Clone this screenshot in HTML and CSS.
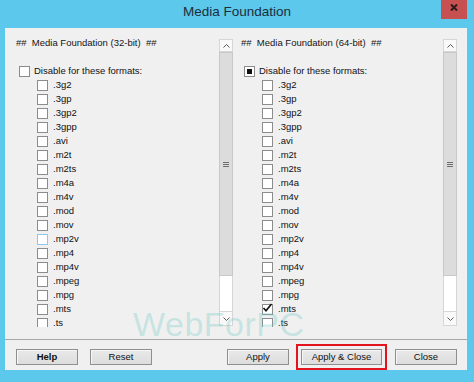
FILE: index.html
```html
<!DOCTYPE html>
<html>
<head>
<meta charset="utf-8">
<link rel="stylesheet" href="styles.css">
</head>
<body>
<div class="window">
  <div class="titlebar">
    <span class="title">Media Foundation</span>
    <div class="close"><svg width="8" height="7" viewBox="0 0 8 7"><path d="M1 0.5 L7 6.5 M7 0.5 L1 6.5" stroke="#2a1c1c" stroke-width="2"/></svg></div>
  </div>
  <div class="client">
    <div class="panels">
      <div class="panel left">
        <div class="list">
          <div class="hdr">##  Media Foundation (32-bit)  ##</div>
          <div class="row master"><span class="cb"></span><span>Disable for these formats:</span></div>
          <ul class="formats">
            <li><span class="cb"></span>.3g2</li>
            <li><span class="cb"></span>.3gp</li>
            <li><span class="cb"></span>.3gp2</li>
            <li><span class="cb"></span>.3gpp</li>
            <li><span class="cb"></span>.avi</li>
            <li><span class="cb"></span>.m2t</li>
            <li><span class="cb"></span>.m2ts</li>
            <li><span class="cb"></span>.m4a</li>
            <li><span class="cb"></span>.m4v</li>
            <li><span class="cb"></span>.mod</li>
            <li><span class="cb"></span>.mov</li>
            <li><span class="cb hover"></span>.mp2v</li>
            <li><span class="cb"></span>.mp4</li>
            <li><span class="cb"></span>.mp4v</li>
            <li><span class="cb"></span>.mpeg</li>
            <li><span class="cb"></span>.mpg</li>
            <li><span class="cb"></span>.mts</li>
            <li><span class="cb"></span>.ts</li>
          </ul>
        </div>
        <div class="scrollbar">
          <div class="sb-btn up"><svg width="7" height="4" viewBox="0 0 7 4"><path d="M0.5 3.5 L3.5 0.5 L6.5 3.5" fill="none" stroke="#5a5a5a" stroke-width="1"/></svg></div>
          <div class="thumb"><span class="grip"></span></div>
          <div class="track"></div>
          <div class="sb-btn down"><svg width="7" height="4" viewBox="0 0 7 4"><path d="M0.5 0.5 L3.5 3.5 L6.5 0.5" fill="none" stroke="#5a5a5a" stroke-width="1"/></svg></div>
        </div>
      </div>
      <div class="panel right">
        <div class="list">
          <div class="hdr">##  Media Foundation (64-bit)  ##</div>
          <div class="row master"><span class="cb mixed"></span><span>Disable for these formats:</span></div>
          <ul class="formats">
            <li><span class="cb"></span>.3g2</li>
            <li><span class="cb"></span>.3gp</li>
            <li><span class="cb"></span>.3gp2</li>
            <li><span class="cb"></span>.3gpp</li>
            <li><span class="cb"></span>.avi</li>
            <li><span class="cb"></span>.m2t</li>
            <li><span class="cb"></span>.m2ts</li>
            <li><span class="cb"></span>.m4a</li>
            <li><span class="cb"></span>.m4v</li>
            <li><span class="cb"></span>.mod</li>
            <li><span class="cb"></span>.mov</li>
            <li><span class="cb"></span>.mp2v</li>
            <li><span class="cb"></span>.mp4</li>
            <li><span class="cb"></span>.mp4v</li>
            <li><span class="cb"></span>.mpeg</li>
            <li><span class="cb"></span>.mpg</li>
            <li><span class="cb checked"><svg width="11" height="10" viewBox="0 0 11 10"><path d="M1.5 5 L4 7.8 L9.5 1" fill="none" stroke="#111" stroke-width="1.7"/></svg></span>.mts</li>
            <li><span class="cb"></span>.ts</li>
          </ul>
        </div>
        <div class="scrollbar">
          <div class="sb-btn up"><svg width="7" height="4" viewBox="0 0 7 4"><path d="M0.5 3.5 L3.5 0.5 L6.5 3.5" fill="none" stroke="#5a5a5a" stroke-width="1"/></svg></div>
          <div class="thumb"><span class="grip"></span></div>
          <div class="track"></div>
          <div class="sb-btn down"><svg width="7" height="4" viewBox="0 0 7 4"><path d="M0.5 0.5 L3.5 3.5 L6.5 0.5" fill="none" stroke="#5a5a5a" stroke-width="1"/></svg></div>
        </div>
      </div>
    </div>
    <div class="footer">
      <button class="btn bold">Help</button>
      <button class="btn">Reset</button>
      <span class="spacer"></span>
      <button class="btn">Apply</button>
      <button class="btn wide marked">Apply &amp; Close</button>
      <button class="btn">Close</button>
    </div>
    <div class="watermark">WebForPC</div>
  </div>
</div>
</body>
</html>
```
FILE: styles.css
```css
html, body {
  margin: 0;
  padding: 0;
}
body {
  width: 474px;
  height: 382px;
  overflow: hidden;
  background: #5bc8ec;
  font-family: "Liberation Sans", Arial, sans-serif;
  color: #111;
}
.window {
  display: flex;
  flex-direction: column;
  height: 382px;
}
.titlebar {
  position: relative;
  height: 28px;
  display: flex;
  justify-content: center;
  align-items: flex-start;
}
.title {
  margin-top: 5px;
  font-size: 13.5px;
  line-height: 14px;
  color: #1d2e3b;
}
.close {
  position: absolute;
  top: 0;
  right: 7px;
  width: 26px;
  height: 19px;
  background: #c75050;
  display: flex;
  justify-content: center;
  align-items: flex-start;
  padding-top: 4px;
  box-sizing: border-box;
}
.close svg { display: block; }
.client {
  position: relative;
  margin: 0 7px 12px 5px;
  height: 342px;
  background: #f0f0f0;
  display: flex;
  flex-direction: column;
}
.panels {
  display: flex;
  gap: 1px;
  padding: 9px 0 0 6px;
  height: 290px;
  margin-bottom: 12px;
}
.panel {
  display: flex;
  height: 290px;
}
.panel.left { width: 224px; }
.panel.right { width: 222px; }
.panel.left .scrollbar { margin-right: 2px; }
.panel.right .scrollbar { margin-right: 1px; }
.list {
  flex: 1;
  overflow: hidden;
  padding-left: 5px;
  font-size: 9.5px;
}
.hdr {
  line-height: 12px;
  height: 12px;
  white-space: pre;
  color: #151515;
}
.row, .formats li {
  display: flex;
  align-items: center;
  height: 14px;
  line-height: 14px;
  white-space: nowrap;
}
.row.master {
  margin-top: 15px;
  padding-left: 3px;
  gap: 4px;
}
.formats {
  list-style: none;
  margin: 0;
  padding: 0 0 0 21px;
}
.formats li { gap: 5px; }
.cb {
  position: relative;
  flex: none;
  width: 9px;
  height: 9px;
  border: 1px solid #8c8c8c;
  background: #fff;
}
.cb.hover { border-color: #8cc8ee; }
.cb.mixed::after {
  content: "";
  position: absolute;
  left: 2px;
  top: 2px;
  width: 5px;
  height: 5px;
  background: #111;
}
.cb.checked svg {
  position: absolute;
  left: -1px;
  top: -2px;
}
.scrollbar {
  flex: none;
  margin-top: 2px;
  width: 14px;
  height: 287px;
  box-sizing: border-box;
  border: 1px solid #d6d6d6;
  background: #fdfdfd;
  display: flex;
  flex-direction: column;
}
.sb-btn {
  flex: none;
  display: flex;
  justify-content: center;
  align-items: center;
  background: #f9f9f9;
}
.sb-btn svg { display: block; }
.sb-btn.up { height: 11px; border-bottom: 1px solid #d6d6d6; }
.sb-btn.down { height: 13px; border-top: 1px solid #d6d6d6; }
.thumb {
  flex: none;
  height: 224px;
  box-sizing: border-box;
  background: #dcdcdc;
  border: 1px solid #c8c8c8;
  margin: 0 -1px;
  display: flex;
  justify-content: center;
  align-items: center;
}
.grip {
  width: 6px;
  height: 5px;
  background: repeating-linear-gradient(#6e6e6e 0 1px, transparent 1px 2px);
}
.track {
  flex: 1;
  background: #fff;
}
.footer {
  display: flex;
  align-items: flex-start;
  border-top: 1px solid #a8a8a8;
  padding: 9px 10px 0 11px;
  flex: 1;
}
.spacer { flex: 1; }
.btn {
  width: 62px;
  height: 16px;
  padding: 0;
  box-sizing: border-box;
  border: 1px solid #8f8f8f;
  background: linear-gradient(#e9e9e9, #dddddd);
  box-shadow: inset 1px 1px 0 #f7f7f7;
  font-family: "Liberation Sans", Arial, sans-serif;
  font-size: 9.5px;
  line-height: 14px;
  color: #111;
  margin-right: 12px;
}
.btn:last-child { margin-right: 0; }
.btn.bold { font-weight: bold; }
.btn.wide { width: 81px; margin-right: 13px; }
.btn.marked {
  outline: 2px solid #e3141e;
  outline-offset: 3px;
}
.watermark {
  position: absolute;
  left: 128px;
  top: 279px;
  font-size: 34px;
  line-height: 34px;
  font-family: "Liberation Sans", Arial, sans-serif;
  color: rgba(110, 200, 195, 0.32);
  letter-spacing: 0.5px;
  pointer-events: none;
}
```
